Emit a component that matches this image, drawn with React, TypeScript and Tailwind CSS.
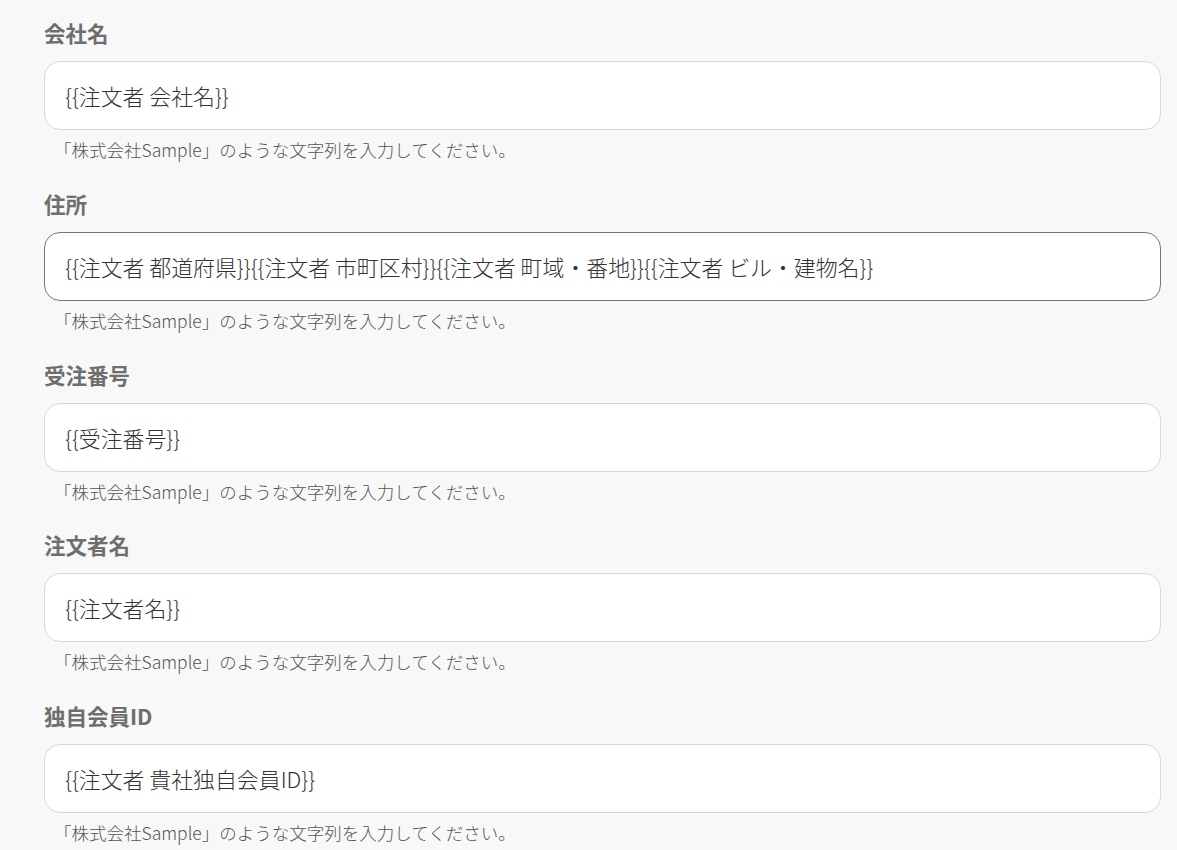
import { useState } from "react";

interface Field {
  label: string;
  value: string;
  focused?: boolean;
}

const fields: Field[] = [
  { label: "会社名", value: "{{注文者 会社名}}" },
  {
    label: "住所",
    value: "{{注文者 都道府県}}{{注文者 市町区村}}{{注文者 町域・番地}}{{注文者 ビル・建物名}}",
    focused: true,
  },
  { label: "受注番号", value: "{{受注番号}}" },
  { label: "注文者名", value: "{{注文者名}}" },
  { label: "独自会員ID", value: "{{注文者 貴社独自会員ID}}" },
];

const HINT = "「株式会社Sample」のような文字列を入力してください。";

function FieldRow({ field }: { field: Field }) {
  const [value, setValue] = useState(field.value);

  return (
    <div className="mb-[31.75px]">
      <label className="block h-[24px] text-[21.5px] leading-[24px] font-bold text-[#6e6e6e]">
        {field.label}
      </label>
      <input
        value={value}
        onChange={(e) => setValue(e.target.value)}
        className={`mt-[16px] block h-[69px] w-full rounded-2xl border bg-white px-[20px] text-[21.9px] font-light text-[#333] outline-none ${
          field.focused ? "border-[#767676]" : "border-[#d5d8df]"
        }`}
      />
      <p className="mt-[10px] pl-[10px] text-[17.5px] leading-[20px] font-light text-[#555]">{HINT}</p>
    </div>
  );
}

export default function App() {
  return (
    <div
      className="min-h-screen bg-[#f8f8f8] pl-[44px] pr-[16px] pt-[21px]"
      style={{ fontFamily: '"Noto Sans CJK JP", "Noto Sans", sans-serif' }}
    >
      {fields.map((f) => (
        <FieldRow key={f.label} field={f} />
      ))}
    </div>
  );
}
